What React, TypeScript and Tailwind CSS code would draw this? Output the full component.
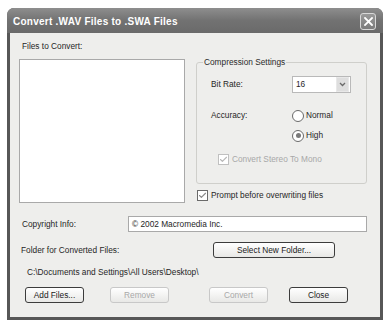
import { Check } from 'lucide-react';

function XpButton({ label, disabled, className }: { label: string; disabled?: boolean; className?: string }) {
  return (
    <button
      disabled={disabled}
      className={`h-[16px] flex items-center justify-center rounded-[3px] border text-[8.3px] leading-none bg-gradient-to-b from-white to-[#e8e8e6] ${
        disabled ? 'border-[#c8c8c8] text-[#a8a8a8]' : 'border-[#3c3c3c] text-[#1a1a1a]'
      } ${className ?? ''}`}
    >
      {label}
    </button>
  );
}

function Radio({ checked, label }: { checked?: boolean; label: string }) {
  return (
    <div className="h-[13px] flex items-center gap-[2px]">
      <span className="w-[12px] h-[12px] rounded-full border border-[#6a6a6a] bg-white flex items-center justify-center">
        {checked && <span className="w-[5px] h-[5px] rounded-full bg-[#7a7a7a]" />}
      </span>
      <span>{label}</span>
    </div>
  );
}

function CheckBox({ label, disabled }: { label: string; disabled?: boolean }) {
  return (
    <div className={`h-[13px] flex items-center gap-[3px] ${disabled ? 'text-[#a8a8a8]' : ''}`}>
      <span className={`w-[11px] h-[11px] border bg-white flex items-center justify-center ${disabled ? 'border-[#c0c0c0]' : 'border-[#6a6a6a]'}`}>
        <Check className={`w-[9px] h-[9px] ${disabled ? 'text-[#b8b8b8]' : 'text-[#8a8a8a]'}`} strokeWidth={3} />
      </span>
      <span>{label}</span>
    </div>
  );
}

export default function App() {
  return (
    <div className="w-[392px] h-[327px] bg-white pl-[7px] pt-[8px] font-['Liberation_Sans',Arial,sans-serif] text-[8.3px] text-[#262626]">
      <div className="w-[376px] h-[312px] flex flex-col rounded-t-[7px] overflow-hidden bg-[#575757]">
        {/* title bar */}
        <div className="h-[25px] flex items-center pl-[6px] pr-[7px] bg-gradient-to-b from-[#8e8e8e] via-[#727272] to-[#6a6a6a]">
          <span className="flex-1 text-white font-bold text-[10px] tracking-[0.25px] pt-[2px]">Convert .WAV Files to .SWA Files</span>
          <span className="w-[16px] h-[17px] mt-[2px] rounded-[3px] border border-[#d8d8d8] bg-gradient-to-b from-[#9a9a9a] to-[#7c7c7c] flex items-center justify-center">
            <svg width="9" height="9" viewBox="0 0 9 9">
              <path d="M1 1 L8 8 M8 1 L1 8" stroke="white" strokeWidth="1.8" strokeLinecap="square" />
            </svg>
          </span>
        </div>

        {/* client area */}
        <div className="flex-1 mx-[3px] mb-[3px] bg-[#eeeeec] pt-[8px] pl-[9px] pr-[13px] flex flex-col">
          <div className="flex">
            <div className="w-[166px] flex flex-col">
              <div className="h-[10px] leading-[10px] ml-[3px]">Files to Convert:</div>
              <div className="mt-[8px] h-[144px] bg-white border border-[#a9a9a9]" />
            </div>
            <div className="ml-[11px] w-[171px] flex flex-col">
              <fieldset className="mt-[16px] h-[127px] border border-[#cfcfcb] rounded-[3px]">
                <legend className="ml-[6px] px-[1px] leading-[10px] text-[#2a2a2a]">Compression Settings</legend>
                <div className="grid grid-cols-[81px_1fr] pl-[14px] mt-[9px]">
                  <div className="h-[17px] flex items-center">Bit Rate:</div>
                  <div className="w-[59px] h-[17px] bg-white border border-[#b9b9b9] flex items-center">
                    <span className="flex-1 pl-[3px]">16</span>
                    <span className="w-[13px] h-[15px] mr-[1px] bg-[#dedede] border border-[#e8e8e8] flex items-center justify-center">
                      <svg width="7" height="5" viewBox="0 0 7 5">
                        <path d="M1 1 L3.5 3.5 L6 1" stroke="#6a6a6a" strokeWidth="1.3" fill="none" />
                      </svg>
                    </span>
                  </div>
                  <div className="h-[13px] mt-[16px] flex items-center">Accuracy:</div>
                  <div className="mt-[16px] flex flex-col gap-[7px]">
                    <Radio label="Normal" />
                    <Radio label="High" checked />
                  </div>
                </div>
                <div className="mt-[11px] ml-[21px]">
                  <CheckBox label="Convert Stereo To Mono" disabled />
                </div>
              </fieldset>
              <div className="mt-[5px] ml-[1px]">
                <CheckBox label="Prompt before overwriting files" />
              </div>
            </div>
          </div>

          <div className="mt-[13px] flex items-center">
            <div className="ml-[3px] w-[106px]">Copyright Info:</div>
            <div className="w-[239px] h-[16px] bg-white border border-[#a9a9a9] flex items-center pl-[3px]">© 2002 Macromedia Inc.</div>
          </div>

          <div className="mt-[10px] flex items-center">
            <div className="ml-[2px] w-[192px]">Folder for Converted Files:</div>
            <XpButton label="Select New Folder..." className="w-[122px]" />
          </div>

          <div className="mt-[9px] ml-[8px] h-[10px] leading-[10px]">C:\Documents and Settings\All Users\Desktop\</div>

          <div className="mt-[10px] flex">
            <XpButton label="Add Files..." className="ml-[6px] w-[59px]" />
            <XpButton label="Remove" disabled className="ml-[26px] w-[59px]" />
            <XpButton label="Convert" disabled className="ml-[40px] w-[59px]" />
            <XpButton label="Close" className="ml-[21px] w-[59px]" />
          </div>
        </div>
      </div>
    </div>
  );
}
